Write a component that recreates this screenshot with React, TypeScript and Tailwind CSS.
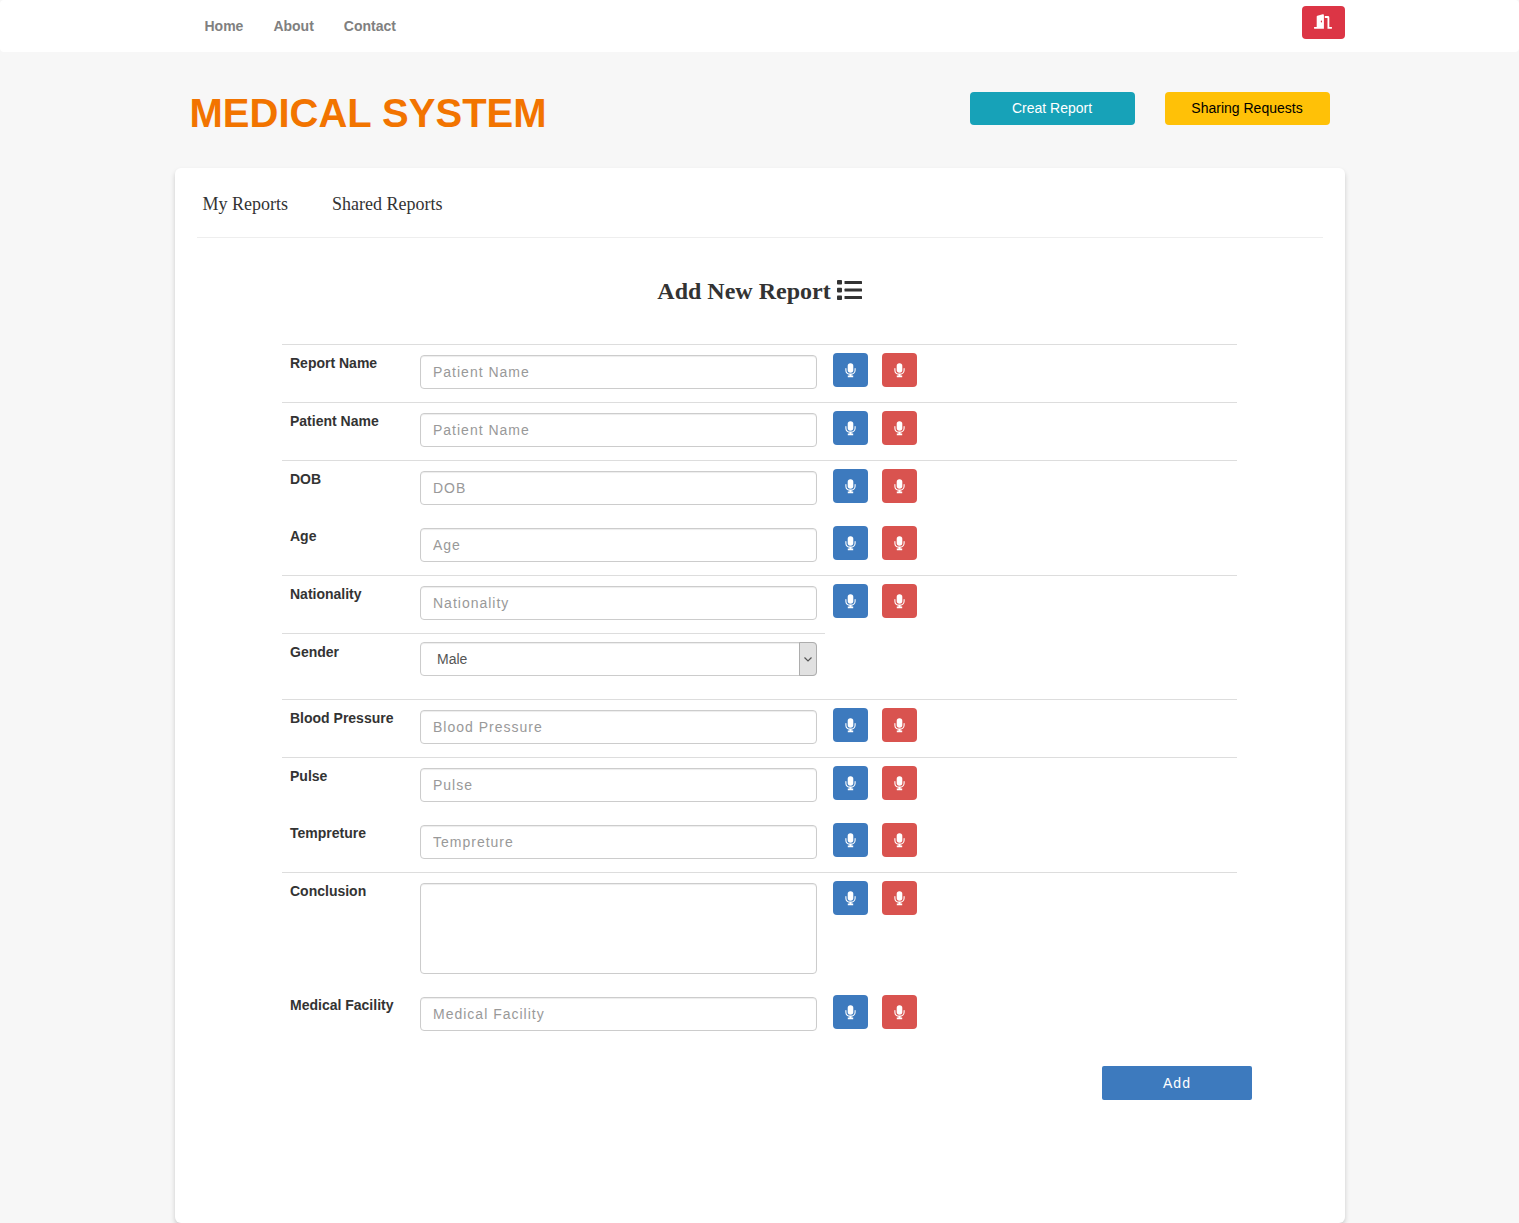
import { FaDoorOpen } from "react-icons/fa";

type Kind = "text" | "select" | "textarea";

interface Field {
  id: string;
  label: string;
  placeholder?: string;
  kind?: Kind;
  ruled?: boolean;
}

const fields: Field[] = [
  { id: "report-name", label: "Report Name", placeholder: "Patient Name", ruled: true },
  { id: "patient-name", label: "Patient Name", placeholder: "Patient Name", ruled: true },
  { id: "dob", label: "DOB", placeholder: "DOB", ruled: true },
  { id: "age", label: "Age", placeholder: "Age" },
  { id: "nationality", label: "Nationality", placeholder: "Nationality", ruled: true },
  { id: "gender", label: "Gender", kind: "select", ruled: true },
  { id: "blood-pressure", label: "Blood Pressure", placeholder: "Blood Pressure", ruled: true },
  { id: "pulse", label: "Pulse", placeholder: "Pulse", ruled: true },
  { id: "tempreture", label: "Tempreture", placeholder: "Tempreture" },
  { id: "conclusion", label: "Conclusion", kind: "textarea", ruled: true },
  { id: "medical-facility", label: "Medical Facility", placeholder: "Medical Facility" },
];

const control =
  "block w-full rounded border border-[#ccc] bg-white text-sm text-[#555] shadow-[inset_0_1px_1px_rgba(0,0,0,0.075)]";

function ListIcon() {
  return (
    <svg viewBox="0 0 25 20" className="mb-0.5 h-5 w-[25px]" fill="currentColor" aria-hidden="true">
      <rect x="0" y="0" width="5" height="4.6" rx="0.8" />
      <rect x="0" y="7.8" width="5" height="4.6" rx="0.8" />
      <rect x="0" y="15.4" width="5" height="4.6" rx="0.8" />
      <rect x="7.5" y="1" width="17.5" height="3" rx="0.6" />
      <rect x="7.5" y="8.6" width="17.5" height="3" rx="0.6" />
      <rect x="7.5" y="16" width="17.5" height="3" rx="0.6" />
    </svg>
  );
}

function MicIcon() {
  return (
    <svg viewBox="0 0 11 15" className="h-[15px] w-[11px]" aria-hidden="true">
      <rect x="2.7" y="0.3" width="5.6" height="9.4" rx="2.7" fill="currentColor" />
      <path
        d="M0.9 5.6V7.2C0.9 9.6 2.9 11.1 5.5 11.1S10.1 9.6 10.1 7.2V5.6"
        fill="none"
        stroke="currentColor"
        strokeWidth="1.1"
        strokeLinecap="round"
      />
      <path d="M4.5 11H6.5V12.6H8.2V14.2H2.8V12.6H4.5Z" fill="currentColor" />
    </svg>
  );
}

function Control({ field }: { field: Field }) {
  if (field.kind === "select") {
    return (
      <div className="relative mb-[15px]">
        <select id={field.id} className={`${control} h-[34px] appearance-none px-4`} defaultValue="Male">
          <option>Male</option>
          <option>Female</option>
        </select>
        <span className="pointer-events-none absolute inset-y-0 right-0 flex w-[18px] items-center justify-center rounded-r border border-[#adadad] bg-[#e1e1e1]">
          <svg viewBox="0 0 8 5" className="h-[5px] w-2" fill="none" stroke="#555" strokeWidth="1.2" aria-hidden="true">
            <path d="M0.5 0.5 4 4 7.5 0.5" />
          </svg>
        </span>
      </div>
    );
  }
  if (field.kind === "textarea") {
    return <textarea id={field.id} className={`${control} mt-0.5 mb-[5px] h-[91px] resize-none px-3 py-1.5`} />;
  }
  return (
    <input
      id={field.id}
      type="text"
      placeholder={field.placeholder}
      className={`${control} mt-0.5 mb-[5px] h-[34px] px-3 tracking-[1px] placeholder:text-[#999]`}
    />
  );
}

function MicButtons({ label }: { label: string }) {
  const base = "flex h-[34px] w-[35px] items-center justify-center rounded text-white";
  return (
    <div className="flex gap-3.5">
      <button type="button" aria-label={`Start dictating ${label}`} className={`${base} bg-[#3d7abe]`}>
        <MicIcon />
      </button>
      <button type="button" aria-label={`Stop dictating ${label}`} className={`${base} bg-[#d9534f]`}>
        <MicIcon />
      </button>
    </div>
  );
}

function FieldRow({ field }: { field: Field }) {
  const rule = field.ruled ? "border-t border-[#ddd]" : "";
  return (
    <tr className="align-top">
      <th scope="row" className={`${rule} w-[130px] p-2 text-left font-bold whitespace-nowrap`}>
        <label htmlFor={field.id} className="block leading-5">{field.label}</label>
      </th>
      <td className={`${rule} p-2`}>
        <Control field={field} />
      </td>
      <td className={field.kind === "select" ? "w-[412px] p-2" : `${rule} w-[412px] p-2`}>
        {field.kind !== "select" && <MicButtons label={field.label} />}
      </td>
    </tr>
  );
}

export default function App() {
  return (
    <div className="min-h-screen bg-[#f7f7f7] font-['Liberation_Sans',Arial,sans-serif] text-sm text-[#333]">
      <header className="rounded bg-white">
        <div className="mx-auto flex h-13 max-w-[1170px] items-start justify-between">
          <nav className="flex gap-[30px] pt-4 pl-[30px] leading-5 font-bold text-[#808080]">
            <a href="#home">Home</a>
            <a href="#about">About</a>
            <a href="#contact">Contact</a>
          </nav>
          <button type="button" aria-label="Log out" className="mt-1.5 flex h-[33px] w-[43px] items-center justify-center rounded bg-[#dc3545] pb-0.5 text-white">
            <FaDoorOpen className="h-[15px] w-[18px]" />
          </button>
        </div>
      </header>

      <div className="mx-auto flex max-w-[1170px] items-start justify-between px-[15px] pt-10 pb-[34px]">
        <h1 className="text-[40px] leading-[42px] font-bold text-[#f27400]">MEDICAL SYSTEM</h1>
        <div className="flex gap-[30px]">
          <button type="button" className="h-[33px] w-[165px] rounded bg-[#17a2b8] pb-0.5 text-white">Creat Report</button>
          <button type="button" className="h-[33px] w-[165px] rounded bg-[#ffc107] pb-0.5 text-black">Sharing Requests</button>
        </div>
      </div>

      <main className="mx-auto max-w-[1170px] rounded-md bg-white px-[22px] pt-6 pb-[123px] shadow-[0_3px_5px_rgba(0,0,0,0.18)]">
        <nav className="flex gap-11 border-b border-[#eee] px-1.5 pb-[21px] font-['Liberation_Serif','Times_New_Roman',serif] text-lg leading-6">
          <a href="#my-reports">My Reports</a>
          <a href="#shared-reports">Shared Reports</a>
        </nav>
        <form className="mx-auto max-w-[955px]" onSubmit={(e) => e.preventDefault()}>
          <h2 className="flex items-center justify-center gap-1.5 py-[38px] font-['Liberation_Serif','Times_New_Roman',serif] text-2xl leading-[30px] font-bold">
            Add New Report
            <ListIcon />
          </h2>
          <table className="w-full border-separate border-spacing-0">
            <tbody>
              {fields.map((field) => (
                <FieldRow key={field.id} field={field} />
              ))}
            </tbody>
          </table>
          <div className="mr-[-15px] flex justify-end pt-[22px]">
            <button type="submit" className="h-[34px] w-[150px] rounded-xs bg-[#3d7abe] tracking-[1px] text-white">Add</button>
          </div>
        </form>
      </main>
    </div>
  );
}
